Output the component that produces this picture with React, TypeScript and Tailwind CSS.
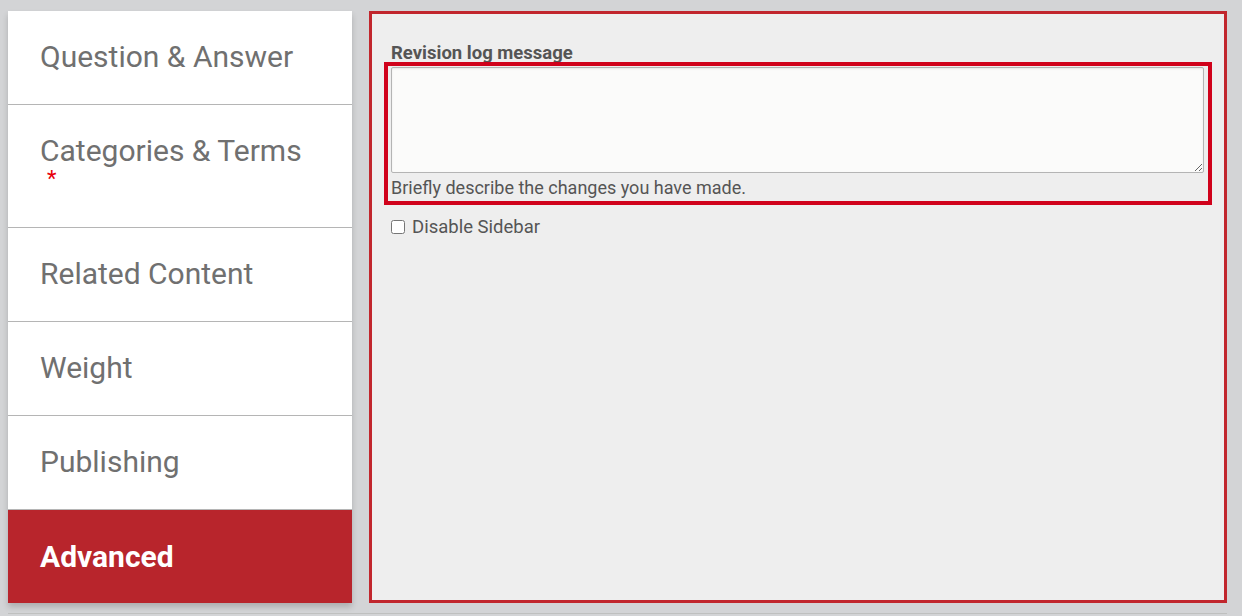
import React from "react";

const tabs = [
  { label: "Question & Answer" },
  { label: "Categories & Terms", required: true },
  { label: "Related Content" },
  { label: "Weight" },
  { label: "Publishing" },
];

export default function App() {
  return (
    <div className="min-h-[616px] w-[1242px] bg-[#d3d4d6] pt-[11px] pl-2 font-['Roboto',sans-serif]">
      <div className="flex gap-[17px] w-[1219px]">
        {/* vertical tabs */}
        <div className="w-[344px] h-[592px] bg-white flex flex-col shadow-[0_4px_6px_rgba(0,0,0,0.18)]">
          {tabs.map((t) => (
            <div
              key={t.label}
              className="border-b border-[#b5b5b5] pl-8 pt-[28px] pb-[30px] text-[30px] leading-[35px] text-[#707070]"
            >
              <div>{t.label}</div>
              {t.required && (
                <div className="h-[29px] pl-[7px] text-[22px] leading-[22px] text-[#e8000b]">*</div>
              )}
            </div>
          ))}
          <div className="flex-1 bg-[#b8252c] pl-8 flex items-center text-[30px] font-bold text-white">
            Advanced
          </div>
        </div>

        {/* advanced panel */}
        <div className="flex-1 h-[592px] border-[3px] border-[#c1262d] bg-[#eeeeee] pl-[19px] pr-5 pt-[28px]">
          <label className="block text-[18.5px] leading-[22px] font-bold text-[#555555]">
            Revision log message
          </label>
          <div className="relative mt-[3px]">
            <textarea className="block w-full h-[106px] bg-[#fbfbfa] border border-[#b4b4b4] rounded-[2px] shadow-[inset_0_1px_2px_rgba(0,0,0,0.08)] resize-y" />
            <div className="text-[18px] leading-[24px] text-[#555555] mt-[3px]">
              Briefly describe the changes you have made.
            </div>
            <div className="absolute -left-[7px] -top-[5px] -right-[8px] -bottom-[5px] border-4 border-[#d0021b] pointer-events-none" />
          </div>
          <label className="mt-[16px] flex items-center gap-[7px] text-[18.5px] leading-[22px] text-[#555555]">
            <input type="checkbox" className="w-[14px] h-[14px] m-0" />
            Disable Sidebar
          </label>
        </div>
      </div>
      <div className="mt-[10px] h-px w-[1219px] bg-[#bfc0bf]" />
    </div>
  );
}
